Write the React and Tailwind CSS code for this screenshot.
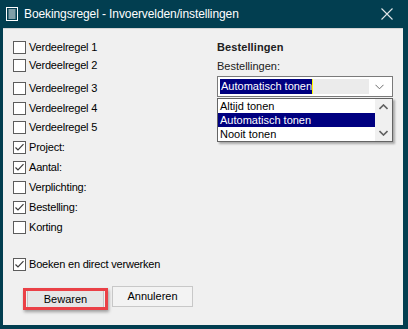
import React from "react";

const font = { fontFamily: '"Liberation Sans", Arial, sans-serif' };

function Check({ checked }) {
    return (
        <span className="w-[13px] h-[13px] border border-[#5c5c5c] bg-white flex items-center justify-center shrink-0">
            {checked && (
                <svg width="11" height="11" viewBox="0 0 11 11">
                    <path d="M1.5 5.5 L4 8 L9.5 2.2" fill="none" stroke="#3c3c3c" strokeWidth="1.2" />
                </svg>
            )}
        </span>
    );
}

function Row({ label, checked, mt }) {
    return (
        <div className={`flex items-center h-[13px] gap-[3px] ${mt}`}>
            <Check checked={checked} />
            <span className="text-[11px] tracking-[-0.2px] text-black leading-none">{label}</span>
        </div>
    );
}

export default function App() {
    return (
        <div className="w-[408px] h-[329px] bg-[#023e50] flex flex-col" style={font}>
            {/* titelbalk */}
            <div className="h-[28px] flex items-center shrink-0">
                <svg className="ml-[6px]" width="12" height="14" viewBox="0 0 12 14">
                    <rect x="0.5" y="0.5" width="11" height="13" fill="none" stroke="#fff" />
                    <path d="M2.5 3h7M2.5 5h7M2.5 7h7M2.5 9h7M2.5 11h7" stroke="#fff" strokeWidth="1" />
                </svg>
                <span className="ml-[6px] text-white text-[12px] tracking-[-0.1px]">Boekingsregel - Invoervelden/instellingen</span>
                <svg className="ml-auto mr-[15px]" width="12" height="12" viewBox="0 0 12 12">
                    <path d="M0.5 0.5 L11.5 11.5 M11.5 0.5 L0.5 11.5" stroke="#e0e6e8" strokeWidth="1.1" />
                </svg>
            </div>

            <div className="flex-1 ml-[3px] mr-[5px] mb-[4px] bg-[#f0f0f0] border-t border-[#d4d4d4] flex">
                {/* linker kolom */}
                <div className="w-[214px] pl-[10px] pt-[12px] flex flex-col">
                    <Row label="Verdeelregel 1" mt="" />
                    <Row label="Verdeelregel 2" mt="mt-[5px]" />
                    <Row label="Verdeelregel 3" mt="mt-[10px]" />
                    <Row label="Verdeelregel 4" mt="mt-[7px]" />
                    <Row label="Verdeelregel 5" mt="mt-[6px]" />
                    <Row label="Project:" checked mt="mt-[7px]" />
                    <Row label="Aantal:" checked mt="mt-[7px]" />
                    <Row label="Verplichting:" mt="mt-[7px]" />
                    <Row label="Bestelling:" checked mt="mt-[7px]" />
                    <Row label="Korting" mt="mt-[7px]" />
                    <Row label="Boeken en direct verwerken" checked mt="mt-[24px]" />

                    <div className="flex gap-[8px] mt-[15px] ml-[14px]">
                        <div className="relative">
                            <button className="w-[77px] h-[21px] bg-[#e6e6e6] border border-[#c4c4c4] text-[11px] text-black">
                                Bewaren
                            </button>
                            <div className="absolute left-[-4px] top-[2px] w-[85px] h-[22px] border-[3px] border-[#ea4046] shadow-[1px_2px_3px_rgba(0,0,0,0.35)]" />
                        </div>
                        <button className="w-[81px] h-[21px] bg-[#f3f3f3] border border-[#c8c8c8] text-[11px] text-black">
                            Annuleren
                        </button>
                    </div>
                </div>

                {/* rechter kolom */}
                <div className="w-[176px] pt-[13px] flex flex-col relative">
                    <div className="text-[11px] font-bold text-[#202020] leading-[11px] tracking-[0.1px]">Bestellingen</div>
                    <div className="text-[11px] text-[#202020] leading-[11px] mt-[8px]">Bestellingen:</div>
                    <div className="mt-[4px] h-[21px] w-[176px] border border-[#7a7a7a] bg-white flex items-center p-[2px]">
                        <div className="flex-1 h-full bg-[#ebebeb] flex items-center">
                            <span className="bg-[#000080] text-white text-[11px] leading-[15px] h-[15px] pl-[1px] border-r border-[#ffff00]">
                                Automatisch tonen
                            </span>
                        </div>
                        <svg className="mx-[6px]" width="9" height="6" viewBox="0 0 9 6">
                            <path d="M0.5 0.8 L4.5 4.8 L8.5 0.8" fill="none" stroke="#6d6d6d" strokeWidth="1" />
                        </svg>
                    </div>

                    {/* uitgeklapte lijst */}
                    <div className="absolute left-0 top-[69px] w-[176px] h-[44px] bg-white border border-[#646464] flex shadow-[2px_2px_2px_rgba(0,0,0,0.3)]">
                        <div className="flex-1 flex flex-col text-[11px] leading-[14px] text-black">
                            <div className="h-[14px] pl-[2px]">Altijd tonen</div>
                            <div className="h-[14px] pl-[2px] bg-[#000080] text-white">Automatisch tonen</div>
                            <div className="h-[14px] pl-[2px]">Nooit tonen</div>
                        </div>
                        <div className="w-[17px] bg-[#f0f0f0] flex flex-col items-center justify-between py-[5px]">
                            <svg width="9" height="6" viewBox="0 0 9 6">
                                <path d="M0.5 5 L4.5 1 L8.5 5" fill="none" stroke="#606060" strokeWidth="1.6" />
                            </svg>
                            <svg width="9" height="6" viewBox="0 0 9 6">
                                <path d="M0.5 1 L4.5 5 L8.5 1" fill="none" stroke="#606060" strokeWidth="1.6" />
                            </svg>
                        </div>
                    </div>
                </div>
            </div>
        </div>
    );
}
